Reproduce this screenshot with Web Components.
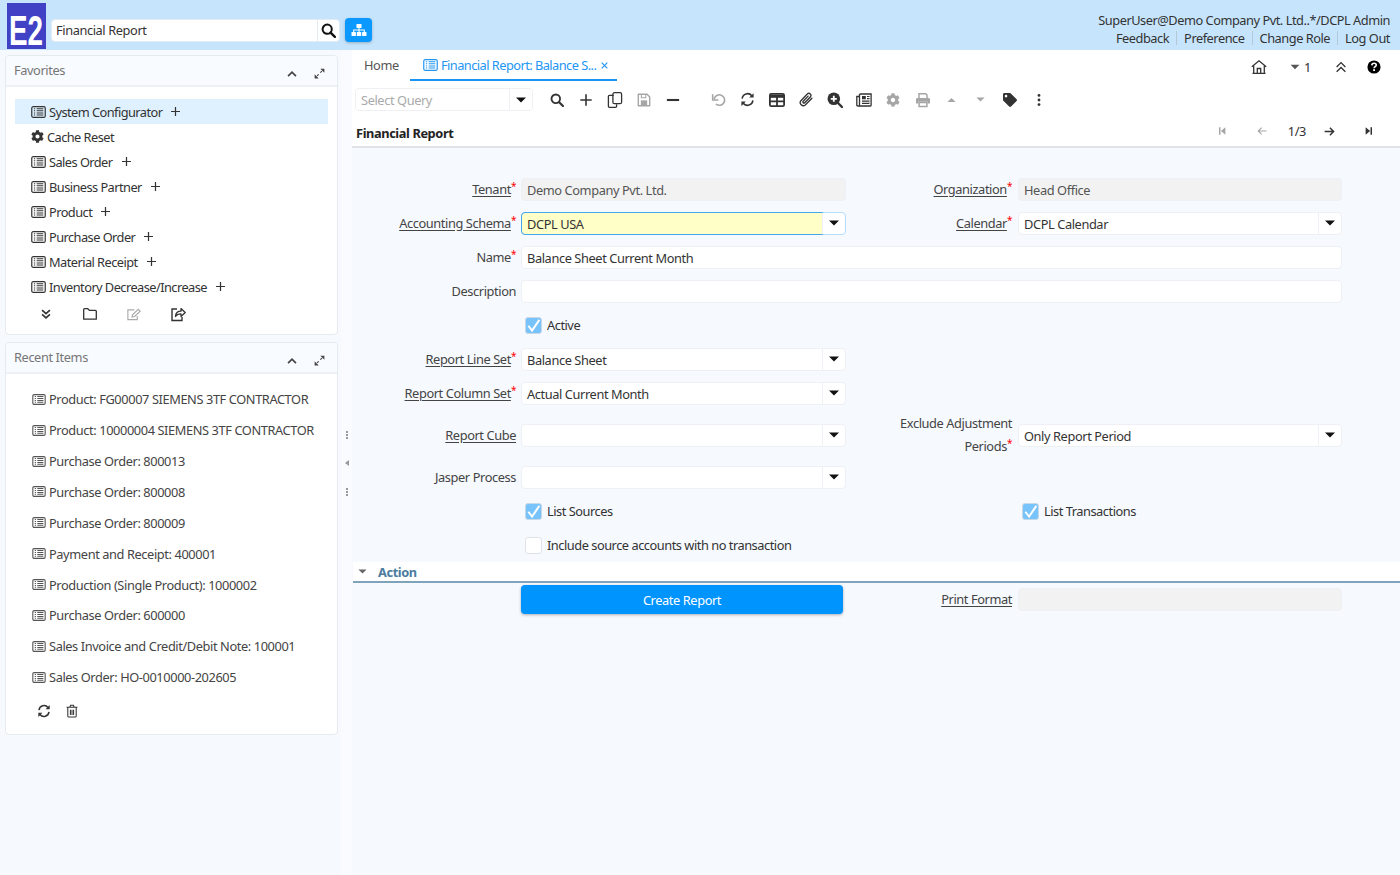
<!doctype html>
<html>
<head>
<meta charset="utf-8">
<title>Financial Report</title>
<style>
  html, body { margin: 0; height: 100%; overflow: hidden; }
  body {
    font: 12.8px "Noto Sans", "Open Sans", sans-serif;
    letter-spacing: -0.4px;
    color: #333;
    background: #f6f9fe;
  }
</style>
</head>
<body>
<e2-app>
  <e2-header slot="header"></e2-header>
  <e2-side slot="side">
    <e2-panel title="Favorites" style="height:280px">
      <div style="height:12px"></div>
      <e2-item icon="list" plus selected>System Configurator</e2-item>
      <e2-item icon="gear" dark>Cache Reset</e2-item>
      <e2-item icon="list" plus>Sales Order</e2-item>
      <e2-item icon="list" plus>Business Partner</e2-item>
      <e2-item icon="list" plus>Product</e2-item>
      <e2-item icon="list" plus>Purchase Order</e2-item>
      <e2-item icon="list" plus>Material Receipt</e2-item>
      <e2-item icon="list" plus>Inventory Decrease/Increase</e2-item>
      <e2-panel-tools style="margin-top:2px">
        <e2-icon name="chevdown" size="14" style="margin-left:23px"></e2-icon>
        <e2-icon name="folder" size="16" style="margin-left:29px"></e2-icon>
        <e2-icon name="edit" size="15" color="#aaa" style="margin-left:28px"></e2-icon>
        <e2-icon name="share" size="16" style="margin-left:29px"></e2-icon>
      </e2-panel-tools>
    </e2-panel>
    <e2-panel title="Recent Items" style="height:393px;margin-top:7px">
      <div style="height:9.8px"></div>
      <e2-item icon="list" recent>Product: FG00007 SIEMENS 3TF CONTRACTOR</e2-item>
      <e2-item icon="list" recent>Product: 10000004 SIEMENS 3TF CONTRACTOR</e2-item>
      <e2-item icon="list" recent>Purchase Order: 800013</e2-item>
      <e2-item icon="list" recent>Purchase Order: 800008</e2-item>
      <e2-item icon="list" recent>Purchase Order: 800009</e2-item>
      <e2-item icon="list" recent>Payment and Receipt: 400001</e2-item>
      <e2-item icon="list" recent>Production (Single Product): 1000002</e2-item>
      <e2-item icon="list" recent>Purchase Order: 600000</e2-item>
      <e2-item icon="list" recent>Sales Invoice and Credit/Debit Note: 100001</e2-item>
      <e2-item icon="list" recent>Sales Order: HO-0010000-202605</e2-item>
      <e2-panel-tools style="margin-top:5.2px">
        <e2-icon name="refresh" size="14" style="margin-left:21px"></e2-icon>
        <e2-icon name="trash" size="14" style="margin-left:14px"></e2-icon>
      </e2-panel-tools>
    </e2-panel>
  </e2-side>
  <e2-splitter slot="split"></e2-splitter>
  <e2-tabs slot="main"></e2-tabs>
  <e2-toolbar slot="main"></e2-toolbar>
  <e2-titlebar slot="main">Financial Report</e2-titlebar>
  <e2-form slot="main">
    <e2-label link req>Tenant</e2-label><e2-input disabled>Demo Company Pvt. Ltd.</e2-input>
    <e2-label link req r>Organization</e2-label><e2-input disabled>Head Office</e2-input>

    <e2-label link req>Accounting Schema</e2-label><e2-input combo focus>DCPL USA</e2-input>
    <e2-label link req r>Calendar</e2-label><e2-input combo>DCPL Calendar</e2-input>

    <e2-label req>Name</e2-label><e2-input wide>Balance Sheet Current Month</e2-input>
    <e2-label>Description</e2-label><e2-input wide></e2-input>

    <e2-check checked style="grid-column:2 / span 3">Active</e2-check>

    <e2-label link req>Report Line Set</e2-label><e2-input combo>Balance Sheet</e2-input><e2-gap></e2-gap>
    <e2-label link req>Report Column Set</e2-label><e2-input combo>Actual Current Month</e2-input><e2-gap></e2-gap>

    <e2-label link>Report Cube</e2-label><e2-input combo></e2-input>
    <e2-label req two r>Exclude Adjustment<br>Periods</e2-label><e2-input combo>Only Report Period</e2-input>

    <e2-label>Jasper Process</e2-label><e2-input combo></e2-input><e2-gap></e2-gap>

    <e2-check checked style="grid-column:2">List Sources</e2-check>
    <e2-check checked style="grid-column:4">List Transactions</e2-check>

    <e2-check style="grid-column:2 / span 3">Include source accounts with no transaction</e2-check>
  </e2-form>
  <e2-section slot="main">Action</e2-section>
  <e2-action-row slot="main"></e2-action-row>
</e2-app>

<script>
const ICONS = {
  list: '<svg viewBox="0 0 16 13"><rect x=".7" y=".7" width="14.6" height="11.6" rx="1.6" fill="none" stroke="currentColor" stroke-width="1.3"/><path d="M3 3h1.4M3 5.2h1.4M3 7.6h1.4M3 9.8h1.4M6 3h7.2M6 5.2h7.2M6 7.6h7.2M6 9.8h7.2" stroke="currentColor" stroke-width="1.2"/></svg>',
  gear: '<svg viewBox="0 0 512 512"><path fill="currentColor" d="M487.4 315.7l-42.6-24.6c4.3-23.2 4.3-47 0-70.2l42.6-24.6c4.9-2.8 7.1-8.6 5.5-14-11.1-35.6-30-67.8-54.7-94.6-3.8-4.1-10-5.1-14.8-2.3L380.8 110c-17.9-15.4-38.5-27.3-60.8-35.1V25.8c0-5.6-3.9-10.5-9.4-11.7-36.7-8.2-74.3-7.8-109.2 0-5.5 1.2-9.4 6.1-9.4 11.7V75c-22.2 7.9-42.8 19.8-60.8 35.1L88.7 85.5c-4.9-2.8-11-1.9-14.8 2.3-24.7 26.7-43.6 58.9-54.7 94.6-1.7 5.4.6 11.2 5.5 14L67.3 221c-4.3 23.2-4.3 47 0 70.2l-42.6 24.6c-4.9 2.8-7.1 8.6-5.5 14 11.1 35.6 30 67.8 54.7 94.6 3.8 4.1 10 5.1 14.8 2.3l42.6-24.6c17.9 15.4 38.5 27.3 60.8 35.1v49.2c0 5.6 3.9 10.5 9.4 11.7 36.7 8.2 74.3 7.8 109.2 0 5.5-1.2 9.4-6.1 9.4-11.7v-49.2c22.2-7.9 42.8-19.8 60.8-35.1l42.6 24.6c4.9 2.8 11 1.9 14.8-2.3 24.7-26.7 43.6-58.9 54.7-94.6 1.5-5.5-.7-11.3-5.6-14.1zM256 336c-44.1 0-80-35.9-80-80s35.9-80 80-80 80 35.9 80 80-35.9 80-80 80z"/></svg>',
  plus: '<svg viewBox="0 0 16 16"><path d="M8 1.5v13M1.5 8h13" stroke="currentColor" stroke-width="1.8" fill="none"/></svg>',
  minus: '<svg viewBox="0 0 16 16"><path d="M1 8h14" stroke="currentColor" stroke-width="2.4"/></svg>',
  search: '<svg viewBox="0 0 16 16"><circle cx="6.6" cy="6.6" r="4.9" fill="none" stroke="currentColor" stroke-width="2.1"/><path d="M10.2 10.2l4.6 4.6" stroke="currentColor" stroke-width="2.5" stroke-linecap="round"/></svg>',
  sitemap: '<svg viewBox="0 0 16 14"><g fill="currentColor"><rect x="5.5" y="1" width="5" height="4" rx=".6"/><rect x=".5" y="9" width="4.4" height="4" rx=".6"/><rect x="5.8" y="9" width="4.4" height="4" rx=".6"/><rect x="11.1" y="9" width="4.4" height="4" rx=".6"/></g><path d="M8 5v4M2.7 9V7h10.6v2" fill="none" stroke="currentColor" stroke-width="1.1"/></svg>',
  up: '<svg viewBox="0 0 16 16"><path d="M3.5 10.5 8 6l4.5 4.5" fill="none" stroke="currentColor" stroke-width="2"/></svg>',
  expand: '<svg viewBox="0 0 16 16"><path d="M9 2h5v5zM7 14H2V9z" fill="currentColor"/><path d="M11 5 9 7M5 11l2-2" stroke="currentColor" stroke-width="1.4"/></svg>',
  chevdown: '<svg viewBox="0 0 16 16"><path d="M3.5 3.5 8 7.5l4.5-4M3.5 8.5 8 12.5l4.5-4" fill="none" stroke="currentColor" stroke-width="1.9"/></svg>',
  chevup: '<svg viewBox="0 0 16 16"><path d="M3 8 8 3l5 5M3 13.5l5-5 5 5" fill="none" stroke="currentColor" stroke-width="1.5"/></svg>',
  folder: '<svg viewBox="0 0 16 16"><path d="M1.7 13.2V3.6c0-.5.4-.9.9-.9h3.2l1.6 1.7h6c.5 0 .9.4.9.9v7.9z" fill="none" stroke="currentColor" stroke-width="1.3" stroke-linejoin="round"/></svg>',
  edit: '<svg viewBox="0 0 16 16"><path d="M12 9.5v4H2V3h7" fill="none" stroke="currentColor" stroke-width="1.2"/><path d="M6.5 10.6l.6-2.6 6-5.5 2 2-6 5.6z" fill="none" stroke="currentColor" stroke-width="1.2"/></svg>',
  share: '<svg viewBox="0 0 16 16"><path d="M7 3H2v11.5h10V11" fill="none" stroke="currentColor" stroke-width="1.4"/><path d="M5.5 10.5c.2-3.6 2.8-5.3 5.5-5.3V2.6l4.2 3.9-4.2 3.9V7.9c-2.4 0-4.3.8-5.5 2.6z" fill="none" stroke="currentColor" stroke-width="1.3" stroke-linejoin="round"/></svg>',
  refresh: '<svg viewBox="0 0 16 16"><path d="M2.3 7A5.8 5.8 0 0 1 12.6 4M13.7 9a5.8 5.8 0 0 1-10.3 3" fill="none" stroke="currentColor" stroke-width="1.7"/><path d="M14.5 1.2v4.7H9.8zM1.5 14.8v-4.7h4.7z" fill="currentColor"/></svg>',
  trash: '<svg viewBox="0 0 16 16"><path d="M3.2 4.4v9.3c0 .7.5 1.2 1.2 1.2h7.200c.7 0 1.200-.5 1.200-1.200V4.400M1.800 3.600h12.400M5.600 3.400l.8-2h3.200l.8 2M6.200 6.500v6M8 6.500v6M9.800 6.500v6" fill="none" stroke="currentColor" stroke-width="1.2"/></svg>',
  copy: '<svg viewBox="0 0 16 16"><path d="M6.7 3.3H2.4c-.6 0-1 .4-1 1v10c0 .6.4 1 1 1h6.200c.6 0 1-.4 1-1v-2" fill="none" stroke="currentColor" stroke-width="1.3"/><rect x="5.9" y=".7" width="8.7" height="11" rx="1.5" fill="none" stroke="currentColor" stroke-width="1.3"/></svg>',
  save: '<svg viewBox="0 0 16 16"><path d="M1.5 1.500h10L14.500 4.500v10h-13z" fill="none" stroke="currentColor" stroke-width="1.6" stroke-linejoin="round"/><path d="M5 2v3.500h5V2" fill="none" stroke="currentColor" stroke-width="1.2"/><rect x="4.4" y="8.4" width="7.2" height="5.5" fill="currentColor"/></svg>',
  undo: '<svg viewBox="0 0 16 16"><path d="M3.4 7.6a5.6 5.6 0 1 1 1.800 5.200" fill="none" stroke="currentColor" stroke-width="1.7"/><path d="M1.8 2.400v6.200h6.100" fill="none" stroke="currentColor" stroke-width="1.7"/></svg>',
  grid: '<svg viewBox="0 0 16 14"><rect x=".9" y=".9" width="14.2" height="12.2" rx="1.4" fill="none" stroke="currentColor" stroke-width="1.8"/><path d="M.9 3.3h14.2" stroke="currentColor" stroke-width="3"/><path d="M1 8.3h14M8 4v9" stroke="currentColor" stroke-width="1.8"/></svg>',
  clip: '<svg viewBox="0 0 16 16"><path d="M13.9 6.3 7.3 13a3.1 3.1 0 0 1-4.400-4.300l6.600-6.900a2.100 2.100 0 0 1 3 2.900L6.700 10.700a1.050 1.050 0 0 1-1.500-1.500l4.900-5.100" fill="none" stroke="currentColor" stroke-width="1.35" stroke-linecap="round"/></svg>',
  zoom: '<svg viewBox="0 0 16 16"><circle cx="6.8" cy="6.8" r="6.3" fill="currentColor"/><path d="M6.800 3.800v6M3.800 6.800h6" stroke="#fff" stroke-width="1.8"/><path d="M11 11l4 4" stroke="currentColor" stroke-width="2.4" stroke-linecap="round"/></svg>',
  news: '<svg viewBox="0 0 16 14"><path d="M3.7 1h11.400v11.300c0 .4-.3.700-.7.700H1.800A1 1 0 0 1 .8 12V3.500h2.400" fill="none" stroke="currentColor" stroke-width="1.3"/><path d="M3.5 1v11.800" stroke="currentColor" stroke-width="1.3"/><path d="M6 3h3.800v3.300H6z" fill="currentColor"/><path d="M11 3.500h2.500M11 5.700h2.500M6 8.200h7.500M6 10.400h7.500" stroke="currentColor" stroke-width="1.2"/></svg>',
  print: '<svg viewBox="0 0 16 16"><path d="M4 6V1.700h6.600L12 3v3" fill="none" stroke="currentColor" stroke-width="1.5"/><path d="M2.300 6h11.400c.7 0 1.300.6 1.300 1.300v4.200h-2.400v-1.700H3.400v1.700H1V7.300C1 6.600 1.600 6 2.300 6z" fill="currentColor"/><path d="M4.100 10.600h7.800v3.900H4.100z" fill="none" stroke="currentColor" stroke-width="1.5"/></svg>',
  triup: '<svg viewBox="0 0 16 16"><path d="M3 11 8 6l5 5z" fill="currentColor"/></svg>',
  tridown: '<svg viewBox="0 0 16 16"><path d="M3 5.500h10L8 10.500z" fill="currentColor"/></svg>',
  tag: '<svg viewBox="0 0 512 512"><path fill="currentColor" d="M0 252.118V48C0 21.490 21.490 0 48 0h204.118a48 48 0 0 1 33.941 14.059l211.882 211.882c18.745 18.745 18.745 49.137 0 67.882L293.823 497.941c-18.745 18.745-49.137 18.745-67.882 0L14.059 286.059A48 48 0 0 1 0 252.118zM112 64c-26.510 0-48 21.490-48 48s21.490 48 48 48 48-21.490 48-48-21.490-48-48-48z"/></svg>',
  dots: '<svg viewBox="0 0 16 16"><circle cx="8" cy="2.8" r="1.6" fill="currentColor"/><circle cx="8" cy="8" r="1.6" fill="currentColor"/><circle cx="8" cy="13.2" r="1.6" fill="currentColor"/></svg>',
  home: '<svg viewBox="0 0 16 16"><path d="M.8 7.700 8 1.800l7.200 5.900" fill="none" stroke="currentColor" stroke-width="1.3"/><path d="M2.700 6.700v7.600h10.600V6.700M1.500 14.400h13M6.300 14.200V9.500h3.400v4.700" fill="none" stroke="currentColor" stroke-width="1.3"/></svg>',
  help: '<svg viewBox="0 0 16 16"><circle cx="8" cy="8" r="7.5" fill="currentColor"/><path d="M5.500 6.100c.1-1.500 1.200-2.300 2.600-2.300 1.500 0 2.500.8 2.500 2 0 1.900-2.500 1.800-2.500 3.700" fill="none" stroke="#fff" stroke-width="1.8"/><rect x="7" y="10.500" width="2.100" height="2.100" fill="#fff"/></svg>',
  first: '<svg viewBox="0 0 16 16"><path d="M4 3h2v10H4zM12.500 3v10L6.500 8z" fill="currentColor"/></svg>',
  last: '<svg viewBox="0 0 16 16"><path d="M10 3h2v10h-2zM3.500 3v10l6-5z" fill="currentColor"/></svg>',
  left: '<svg viewBox="0 0 16 16"><path d="M14 8H3M7.500 3.500 3 8l4.500 4.500" fill="none" stroke="currentColor" stroke-width="1.5"/></svg>',
  right: '<svg viewBox="0 0 16 16"><path d="M2 8h11M8.500 3.500 13 8l-4.500 4.500" fill="none" stroke="currentColor" stroke-width="1.8"/></svg>',
  close: '<svg viewBox="0 0 16 16"><path d="M3 3l10 10M13 3 3 13" stroke="currentColor" stroke-width="2"/></svg>',
  check: '<svg viewBox="0 0 18 18" style="overflow:visible"><path d="M2.800 9.300 7.300 15 16 2.200" fill="none" stroke="#fff" stroke-width="2.4"/></svg>'
};

// small helper, every element below is just a template in a shadow root
function define(tag, css, html, init) {
  customElements.define(tag, class extends HTMLElement {
    connectedCallback() {
      if (this.shadowRoot) return;
      const root = this.attachShadow({ mode: 'open' });
      const body = typeof html === 'function' ? html(this) : html;
      root.innerHTML = `<style>${css}</style>${body}`;
      if (init) init(this, root);
    }
  });
}
const icon = (name, size, extra = '') => `<e2-icon name="${name}" size="${size}" ${extra}></e2-icon>`;

define('e2-icon', `
  :host { display: inline-flex; align-items: center; justify-content: center; flex: none; }
  svg { width: 100%; height: 100%; display: block; }
`, el => ICONS[el.getAttribute('name')] || '', el => {
  const s = el.getAttribute('size') || 16;
  el.style.width = s + 'px';
  el.style.height = (el.getAttribute('h') || s) + 'px';
  if (el.hasAttribute('color')) el.style.color = el.getAttribute('color');
});

define('e2-app', `
  :host { display: flex; flex-direction: column; height: 875px; width: 1400px; }
  .body { flex: 1; display: flex; min-height: 0; }
  .main { flex: 1; min-width: 0; display: flex; flex-direction: column; }
`, `<slot name="header"></slot>
  <div class="body">
    <slot name="side"></slot>
    <slot name="split"></slot>
    <div class="main"><slot name="main"></slot></div>
  </div>`);

define('e2-header', `
  :host { display: flex; align-items: flex-start; height: 50px; background: #c6e5fd; padding-left: 7px; box-sizing: border-box; }
  .logo { width: 39px; height: 46px; margin-top: 3px; background: #4141c6; }
  .logo svg { display: block; width: 39px; height: 46px; overflow: visible; }
  .logo text { font: bold 43px "Liberation Sans", sans-serif; letter-spacing: 0; fill: #fff; }
  .search {
    margin: 19px 0 0 5px; width: 289px; height: 23px; box-sizing: border-box; background: #fff;
    border: 1px solid #e3eaf0; border-radius: 4px; display: flex; align-items: center;
  }
  .search .txt { flex: 1; padding: 0 0 2px 4px; color: #333; }
  .search .btn { width: 21px; height: 100%; border-left: 1px solid #e3eaf0; display: flex; align-items: center; justify-content: center; color: #111; }
  .tree {
    margin: 18px 0 0 5px; width: 27px; height: 24px; background: #0b98ff; color: #fff; border-radius: 4px;
    display: flex; align-items: center; justify-content: center; box-shadow: 0 1px 3px rgba(0,0,0,.25);
  }
  .user { margin-left: auto; padding: 11px 10px 0 0; text-align: right; color: #333; line-height: 18px; letter-spacing: -.47px; }
  .links { display: flex; justify-content: flex-end; }
  .links span + span { border-left: 1px solid #b5c8d6; margin-left: 7px; padding-left: 7px; line-height: 14px; margin-top: 2px; height: 14px; }
`, `<div class="logo"><svg viewBox="0 0 39 46"><text x="2" y="42" textLength="34" lengthAdjust="spacingAndGlyphs">E2</text></svg></div>
  <div class="search"><div class="txt">Financial Report</div><div class="btn">${icon('search', 15)}</div></div>
  <div class="tree">${icon('sitemap', 16, 'h="14"')}</div>
  <div class="user">
    <div>SuperUser@Demo Company Pvt. Ltd..*/DCPL Admin</div>
    <div class="links"><span>Feedback</span><span>Preference</span><span>Change Role</span><span>Log Out</span></div>
  </div>`);

define('e2-side', `
  :host { display: block; width: 341px; flex: none; padding: 5px 3px 0 4.5px; box-sizing: border-box; }
`, `<slot></slot>`);

define('e2-panel', `
  :host { display: flex; flex-direction: column; box-sizing: border-box; background: #fff; border: 1px solid #e6ebf0; border-radius: 4px; }
  .head {
    height: 31px; flex: none; box-sizing: border-box; background: #f8fbff; border-bottom: 2px solid #edf0f4; border-radius: 4px 4px 0 0;
    display: flex; align-items: flex-start; padding: 5px 11px 0 8.5px; color: #767676;
  }
  .head .t { flex: 1; }
  .head e2-icon { margin-top: 6px; color: #444; }
`, el => `<div class="head"><div class="t">${el.getAttribute('title')}</div>
    ${icon('up', 14)}<span style="width:14px"></span>${icon('expand', 13)}</div><slot></slot>`);

define('e2-panel-tools', `
  :host { display: flex; align-items: center; height: 26px; padding-left: 10px; color: #333; }
`, `<slot></slot>`);

define('e2-item', `
  :host { display: flex; align-items: center; height: 25px; margin: 0 9.5px; padding-left: 16px; color: #333; flex: none; letter-spacing: -.55px; }
  :host([selected]) { background: #dff1fe; }
  :host([recent]) { height: 30.9px; color: #444; padding-left: 17px; letter-spacing: -.4px; }
  :host([recent]) e2-icon { color: #555; }
  .txt { margin-left: 3px; white-space: nowrap; }
  .p { margin-left: 8px; display: flex; }
`, el => {
  const gear = el.getAttribute('icon') === 'gear';
  const list = el.hasAttribute('recent') ? icon('list', 14, 'h="11"') : icon('list', 15, 'h="12"');
  return `${gear ? icon('gear', 13) : list}
    <span class="txt"><slot></slot></span>
    ${el.hasAttribute('plus') ? `<span class="p">${icon('plus', 11)}</span>` : ''}`;
});

define('e2-splitter', `
  :host { display: flex; flex-direction: column; align-items: center; width: 11px; flex: none; background: #f9fbff; padding-top: 381px; box-sizing: border-box; }
  i { display: block; width: 2px; height: 2px; background: #999; margin-bottom: 1px; }
  b { display: block; width: 0; height: 0; border: 3px solid transparent; border-right: 4px solid #999; border-left: 0; margin: 20px 0 22px; }
`, `<i></i><i></i><i></i><b></b><i></i><i></i><i></i>`);

define('e2-tabs', `
  :host { display: flex; height: 33px; background: #fff; box-sizing: border-box; align-items: flex-start; color: #555; flex: none; }
  .home { margin: 6px 0 0 12px; width: 46px; }
  .tab {
    width: 207px; height: 31px; box-sizing: border-box; border-bottom: 2px solid #1a94f5; color: #2296f3;
    display: flex; align-items: center; padding: 0 0 0 13px; white-space: nowrap; letter-spacing: -.54px;
  }
  .tab e2-icon:first-child { margin-right: 3px; }
  .x { margin: 2px 0 0 4px; display: flex; }
  .right { margin-left: auto; display: flex; align-items: center; height: 33px; color: #333; }
`, `<div class="home">Home</div>
  <div class="tab">${icon('list', 15, 'h="12"')}Financial Report: Balance S...<span class="x">${icon('close', 9)}</span></div>
  <div class="right">
    ${icon('home', 16)}
    <span style="width:21px"></span>${icon('tridown', 14, 'color="#555"')}<span style="margin-left:2px;width:30px">1</span>
    ${icon('chevup', 14)}
    <span style="width:19px"></span>${icon('help', 14, 'color="#000"')}
    <span style="width:19px"></span>
  </div>`);

define('e2-toolbar', `
  :host { display: flex; align-items: center; height: 33px; background: #fff; padding-left: 3px; color: #333; flex: none; }
  .q {
    width: 178px; height: 23px; box-sizing: border-box; border: 1px solid #eef0f3; border-radius: 4px; display: flex; align-items: center;
    color: #aaa; margin-right: 9px;
  }
  .q span { flex: 1; padding-left: 5px; }
  .q div { width: 22px; height: 100%; border-left: 1px solid #eef0f3; display: flex; align-items: center; justify-content: center; color: #111; }
  .b { width: 29.18px; display: flex; justify-content: center; }
  .gap { margin-left: 16px; }
`, () => {
  const off = 'color="#a6a6a6"';
  return `<div class="q"><span>Select Query</span><div>${icon('tridown', 16)}</div></div>
  <div class="b">${icon('search', 14)}</div>
  <div class="b">${icon('plus', 14)}</div>
  <div class="b">${icon('copy', 16)}</div>
  <div class="b">${icon('save', 14, off)}</div>
  <div class="b">${icon('minus', 14)}</div>
  <div class="b gap">${icon('undo', 15, off)}</div>
  <div class="b">${icon('refresh', 15)}</div>
  <div class="b">${icon('grid', 16, 'h="14"')}</div>
  <div class="b">${icon('clip', 16)}</div>
  <div class="b">${icon('zoom', 16)}</div>
  <div class="b">${icon('news', 16, 'h="14"')}</div>
  <div class="b">${icon('gear', 14, off)}</div>
  <div class="b">${icon('print', 16, off)}</div>
  <div class="b">${icon('triup', 13, off)}</div>
  <div class="b">${icon('tridown', 13, off)}</div>
  <div class="b">${icon('tag', 14)}</div>
  <div class="b">${icon('dots', 14)}</div>`;
});

define('e2-titlebar', `
  :host { display: flex; align-items: center; height: 32px; background: #fff; border-bottom: 2px solid #dfe3e8; box-sizing: border-box; padding-left: 4px; flex: none; }
  b { color: #222; font-weight: 700; margin-top: 3px; }
  .nav { margin-left: auto; display: flex; align-items: center; color: #333; }
`, () => `<b><slot></slot></b>
  <div class="nav">
    ${icon('first', 12, 'color="#a6a6a6"')}
    <span style="width:28px"></span>${icon('left', 12, 'color="#a6a6a6"')}
    <span style="width:20px;"></span><span>1/3</span>
    <span style="width:17px"></span>${icon('right', 13)}
    <span style="width:27px"></span>${icon('last', 12)}
    <span style="width:25px"></span>
  </div>`);

define('e2-form', `
  :host {
    display: grid; flex: none; padding: 29.5px 0 0 0;
    grid-template-columns: 169px 325px 172px 324px;
    row-gap: 11px; align-items: center; color: #444;
  }
`, `<slot></slot>`);

define('e2-label', `
  :host { display: block; text-align: right; padding-right: 5px; color: #444; line-height: 23px; }
  :host([r]) { padding-right: 6px; }
  :host([two]) { margin: -3.5px 0; }
  .s { color: #f00; font-size: 10px; vertical-align: 4px; line-height: 0; }
  :host([link]) .t { text-decoration: underline; text-underline-offset: 2px; }
`, el => `<span class="t"><slot></slot></span>${el.hasAttribute('req') ? '<span class="s">*</span>' : ''}`);

define('e2-input', `
  :host { display: flex; height: 23px; box-sizing: border-box; border-radius: 4px; background: #fff; border: 1px solid #edf0f4; color: #333; }
  :host([wide]) { grid-column: span 3; }
  :host([disabled]) { background: #f2f2f2; color: #555; }
  .v { flex: 1; padding-left: 5px; line-height: 22px; white-space: nowrap; border-radius: 3px 0 0 3px; }
  .c { width: 22px; display: flex; align-items: center; justify-content: center; border-left: 1px solid #edf0f4; color: #111; }
  :host([focus]) { border-color: #b5dcf9; }
  :host([focus]) .v { background: #ffffc8; outline: 1px solid #44a6ec; }
`, el => `<div class="v"><slot></slot></div>${el.hasAttribute('combo') ? `<div class="c">${icon('tridown', 16)}</div>` : ''}`);

define('e2-gap', `:host { display: block; grid-column: span 2; }`, ``);

define('e2-check', `
  :host { display: flex; align-items: center; height: 23px; padding-left: 4px; color: #333; letter-spacing: -.47px; }
  .box { width: 15px; height: 15px; border: 1px solid #dfe3e8; border-radius: 3px; background: #fff; margin-right: 5px; display: flex; }
  :host([checked]) .box { background: #78c3fb; border-color: #c7d8e6; }
`, el => `<div class="box">${el.hasAttribute('checked') ? icon('check', 15) : ''}</div><slot></slot>`);

define('e2-section', `
  :host { display: flex; align-items: center; height: 21px; margin: 5px 0 0 1px; padding: 1px 0 0 3px; background: #fff; border-bottom: 2px solid #7fa3ba; box-sizing: border-box; flex: none; color: #4a7ca0; font-weight: 700; }
  span { margin-left: 9px; }
`, `${icon('tridown', 13, 'color="#666"')}<span><slot></slot></span>`);

define('e2-action-row', `
  :host { display: grid; grid-template-columns: 169px 322px 175px 324px; align-items: center; margin-top: 2.5px; flex: none; }
  .go { grid-column: 2; height: 29px; background: #0094ff; color: #fff; border-radius: 4px; display: flex; align-items: center; justify-content: center; box-shadow: 0 1px 3px rgba(0,0,0,.3); }
`, `<div class="go">Create Report</div>
  <e2-label link r style="grid-column:3">Print Format</e2-label>
  <e2-input disabled></e2-input>`);
</script>
</body>
</html>
